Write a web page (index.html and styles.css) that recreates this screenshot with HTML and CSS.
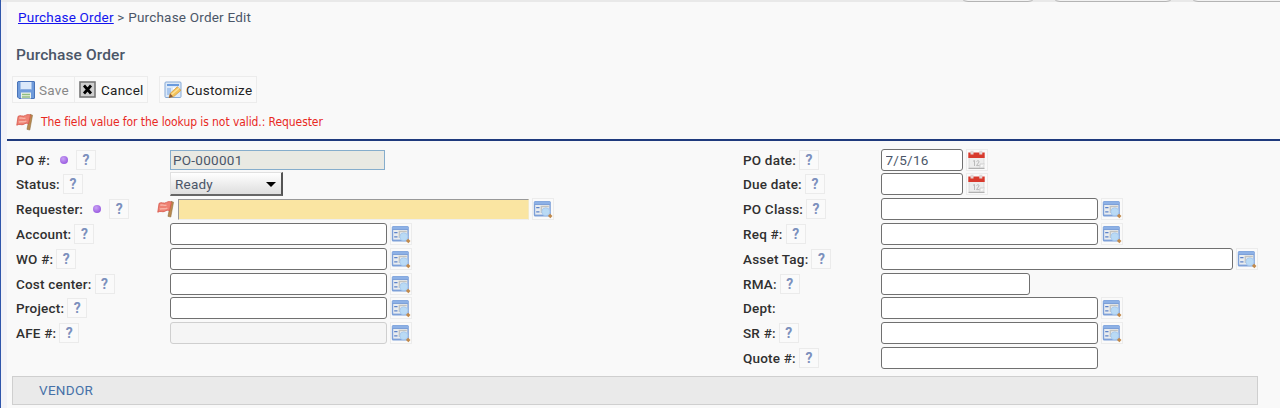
FILE: index.html
```
<!DOCTYPE html>
<html lang="en">
    <head>
        <meta charset="UTF-8">
        <title>Purchase Order Edit</title>
        <link rel="stylesheet" href="styles.css">
    </head>
    <body>
        <svg class="defs" width="0" height="0">
            <symbol id="flag" viewBox="0 0 18 18">
                <path d="M14.8 .8 L17.5 1.8 L14.6 17.5 L11.6 16.8 Z" fill="#b98a4e" stroke="#8f6a3c" stroke-width=".6"/>
                <path d="M2.2 3 C5 1 7 4 10 2 C12 .8 14 1 15.3 1.8 L13.2 11 C11.5 9.6 10 10.4 8 11.6 C5.6 12.6 3.8 10.6 .8 12.4 Z" fill="#ee8173" stroke="#d65448" stroke-width=".8"/>
                <path d="M3.5 5 C6 4 7.5 6 10 4.8 M3 9 C5.5 8 8 9.6 11 8" fill="none" stroke="#f8b3a6" stroke-width="1.5"/>
            </symbol>
            <symbol id="lookup" viewBox="0 0 20 20">
                <rect x=".8" y="2" width="17" height="15.5" rx="1.5" fill="#7da0d8"/>
                <path d="M1.3 5 V3.5 Q1.3 2.5 3 2.5 H16 Q17.3 2.5 17.3 3.5 V5 Z" fill="#8db1e6"/>
                <rect x="2.2" y="6" width="14.2" height="9.6" fill="#e9edf0"/>
                <path d="M3.2 8.6 H6.5 M3.2 12.8 H6.5" stroke="#5d82c8" stroke-width="1.3"/>
                <path d="M8.3 14 V7.5 H15.8" fill="none" stroke="#c3c3bf" stroke-width="1.3"/>
                <path d="M15.8 15.7 L18.4 18.2" stroke="#c18a4c" stroke-width="3"/>
                <circle cx="12.8" cy="12.8" r="4" fill="#b9daf5" stroke="#a5c6ec" stroke-width=".8"/>
            </symbol>
            <symbol id="calendar" viewBox="0 0 20 20">
                <rect x="2" y="6" width="15" height="12" fill="#ededed" stroke="#d2d2d2" stroke-width=".7"/>
                <path d="M1.5 18.4 H17.5" stroke="#aaa" stroke-width="1"/>
                <path d="M1.3 2.5 H17.7 V8 H1.3 Z" fill="#d83a2d"/>
                <path d="M5 .8 V4.5 M13.8 .8 V4.5" stroke="#e2d6d6" stroke-width="3"/>
                <path d="M6 11.3 L7.5 10.5 V16 M9.5 11.5 Q12 9.5 12 12 L9.5 15.6 H12.5" fill="none" stroke="#bbb" stroke-width="1"/>
                <path d="M13 18 V14 H17.5" fill="#fafafa" stroke="#c6c6c6" stroke-width=".8"/>
            </symbol>
        </svg>

        <div class="topbar">
            <span class="pill pill-1"></span>
            <span class="pill pill-2"></span>
            <span class="pill pill-3"></span>
        </div>
        <div class="page">
            <div class="breadcrumb"><a href="#">Purchase Order</a> &gt; Purchase Order Edit</div>
            <h1 class="title">Purchase Order</h1>
            <div class="toolbar">
                <button class="btn btn-save" disabled>
                    <svg width="18" height="18" viewBox="0 0 18 18">
                        <path d="M1 .5 H17 Q17.5 .5 17.5 1 V17 Q17.5 17.5 17 17.5 H2 L.5 16 V1 Z" fill="#6f9bdb" stroke="#4a74b8"/>
                        <rect x="3.5" y="1" width="11" height="7.5" fill="#dce9fa"/>
                        <path d="M3.5 8.5 H14.5" stroke="#8caee0"/>
                        <rect x="4" y="11.5" width="10" height="6" fill="#eef3e8"/>
                        <path d="M5 13.5 H13 M5 16 H13" stroke="#90bd80" stroke-width="1.3"/>
                    </svg>
                    <span>Save</span>
                </button>
                <button class="btn btn-cancel">
                    <svg width="17" height="17" viewBox="0 0 17 17">
                        <rect x="1" y="1" width="15" height="15" fill="#cfcfcf" stroke="#777" stroke-width="1.6"/>
                        <path d="M5 4.5 L12 12.5 M12 4.5 L5 12.5" stroke="#000" stroke-width="2.7"/>
                    </svg>
                    <span>Cancel</span>
                </button>
                <button class="btn btn-customize">
                    <svg width="18" height="18" viewBox="0 0 18 18">
                        <rect x="1" y="1" width="16" height="15.5" rx="1" fill="#dce9f8" stroke="#86a9d6"/>
                        <path d="M3 4 H15" stroke="#6b9bdd" stroke-width="2"/>
                        <path d="M3 7 H7 V14 H3 Z" fill="#a9c7ee"/>
                        <path d="M9 7.5 H14" stroke="#fff" stroke-width="2"/>
                        <path d="M5 16.5 L6.3 12.3 L13.3 5.8 L17 9.3 L9.5 15.8 Z" fill="#f4c35a" stroke="#cf9640" stroke-width=".7"/>
                        <path d="M7.5 13.6 L15 7.2" stroke="#fbe2a0" stroke-width="1.3"/>
                        <path d="M4.8 17 L6.2 12.8 L9 15.6 Z" fill="#8a5c3a"/>
                    </svg>
                    <span>Customize</span>
                </button>
            </div>
            <div class="error">
                <svg class="flag"><use href="#flag"/></svg>
                <span>The field value for the lookup is not valid.: Requester</span>
            </div>
        </div>

        <div class="form">
            <div class="col col-left">
                <div class="row">
                    <div class="label">PO #:<i class="dot"></i><b class="help">?</b></div>
                    <input class="readonly" type="text" value="PO-000001" readonly>
                </div>
                <div class="row">
                    <div class="label">Status:<b class="help">?</b></div>
                    <div class="select">Ready<i class="caret"></i></div>
                </div>
                <div class="row row-error">
                    <div class="label">Requester:<i class="dot"></i><b class="help">?</b></div>
                    <svg class="flag"><use href="#flag"/></svg>
                    <input class="invalid" type="text">
                    <span class="pick"><svg><use href="#lookup"/></svg></span>
                </div>
                <div class="row">
                    <div class="label">Account:<b class="help">?</b></div>
                    <input type="text">
                    <span class="pick"><svg><use href="#lookup"/></svg></span>
                </div>
                <div class="row">
                    <div class="label">WO #:<b class="help">?</b></div>
                    <input type="text">
                    <span class="pick"><svg><use href="#lookup"/></svg></span>
                </div>
                <div class="row">
                    <div class="label">Cost center:<b class="help">?</b></div>
                    <input type="text">
                    <span class="pick"><svg><use href="#lookup"/></svg></span>
                </div>
                <div class="row">
                    <div class="label">Project:<b class="help">?</b></div>
                    <input type="text">
                    <span class="pick"><svg><use href="#lookup"/></svg></span>
                </div>
                <div class="row">
                    <div class="label">AFE #:<b class="help">?</b></div>
                    <input type="text" disabled>
                    <span class="pick"><svg><use href="#lookup"/></svg></span>
                </div>
            </div>
            <div class="col col-right">
                <div class="row">
                    <div class="label">PO date:<b class="help">?</b></div>
                    <input class="date" type="text" value="7/5/16">
                    <span class="pick"><svg><use href="#calendar"/></svg></span>
                </div>
                <div class="row">
                    <div class="label">Due date:<b class="help">?</b></div>
                    <input class="date" type="text">
                    <span class="pick"><svg><use href="#calendar"/></svg></span>
                </div>
                <div class="row">
                    <div class="label">PO Class:<b class="help">?</b></div>
                    <input type="text">
                    <span class="pick"><svg><use href="#lookup"/></svg></span>
                </div>
                <div class="row">
                    <div class="label">Req #:<b class="help">?</b></div>
                    <input type="text">
                    <span class="pick"><svg><use href="#lookup"/></svg></span>
                </div>
                <div class="row">
                    <div class="label">Asset Tag:<b class="help">?</b></div>
                    <input class="wide" type="text">
                    <span class="pick"><svg><use href="#lookup"/></svg></span>
                </div>
                <div class="row">
                    <div class="label">RMA:<b class="help">?</b></div>
                    <input class="medium" type="text">
                </div>
                <div class="row">
                    <div class="label">Dept:</div>
                    <input type="text">
                    <span class="pick"><svg><use href="#lookup"/></svg></span>
                </div>
                <div class="row">
                    <div class="label">SR #:<b class="help">?</b></div>
                    <input type="text">
                    <span class="pick"><svg><use href="#lookup"/></svg></span>
                </div>
                <div class="row">
                    <div class="label">Quote #:<b class="help">?</b></div>
                    <input type="text">
                </div>
            </div>
        </div>
        <div class="section">VENDOR</div>
    </body>
</html>
```
FILE: styles.css
```
*{
    box-sizing:border-box;
    margin:0;
    padding:0;
}
body{
    height:408px;
    overflow:hidden;
    background:linear-gradient(90deg,#2f56ab 1px,#f2f2f7 1px,#f2f2f7 7px,#f9f9f9 7px);
    font:13.5px/20px Roboto, sans-serif;
    letter-spacing:.21px;
    color:#4b5668;
}
.defs{
    display:block;
}
.topbar{
    display:flex;
    height:2px;
    margin-left:1px;
    padding-left:958px;
    background:#e9e9e9;
}
.pill{
    flex:none;
    height:18px;
    margin-top:-16px;
    border:1px solid #b4b4b4;
    border-radius:9px;
    background:#f2f2f2;
}
.pill-1{
    width:78px;
}
.pill-2{
    width:124px;
    margin-left:14px;
}
.pill-3{
    width:120px;
    margin-left:14px;
}
.page{
    height:137px;
    padding:5px 0 0 16px;
}
.breadcrumb{
    padding-left:2px;
}
.breadcrumb a{
    color:#1414ee;
}
.title{
    margin-top:18px;
    font-size:15.5px;
    line-height:21px;
    font-weight:500;
    letter-spacing:.1px;
}
.toolbar{
    display:flex;
    height:27px;
    margin:10px 0 0 -4px;
}
.btn{
    display:flex;
    align-items:center;
    border:1px solid #ececec;
    background:#fafafa;
    font:13.5px/20px Roboto, sans-serif;
    letter-spacing:.25px;
    color:#222;
}
.btn-save{
    width:63px;
    padding-left:4px;
    gap:4px;
    color:#888;
}
.btn-cancel{
    width:74px;
    margin-left:-1px;
    padding-left:4px;
    gap:5px;
}
.btn-customize{
    width:98px;
    margin-left:11px;
    padding-left:4px;
    gap:4px;
}
.error{
    display:flex;
    align-items:center;
    height:20px;
    margin-top:9px;
    gap:8px;
    font:12px/20px "DejaVu Sans Condensed", "DejaVu Sans", sans-serif;
    font-stretch:condensed;
    letter-spacing:-.08px;
    color:#e8291f;
}
.flag{
    flex:none;
    width:17px;
    height:18px;
}

/* field rows */
.form{
    display:flex;
    height:237px;
    margin-left:7px;
    padding:6.3px 0 0 9px;
    border-top:2px solid #1f3a7d;
}
.col-left{
    width:727px;
}
.row{
    display:flex;
    align-items:center;
    height:24.8px;
}
.label{
    display:flex;
    flex:none;
    align-items:center;
    width:154px;
    font-weight:500;
    letter-spacing:.2px;
    color:#303030;
}
.col-right .label{
    width:137.5px;
}
.row-error .label{
    width:141px;
}
.help{
    width:20px;
    height:20px;
    margin-left:3px;
    border:1px solid #ebebeb;
    background:#fafafa;
    font-size:14px;
    line-height:19px;
    font-weight:700;
    letter-spacing:0;
    text-align:center;
    color:#7c90bd;
}
.dot{
    width:8px;
    height:8px;
    margin:0 5px 0 10px;
    border-radius:4px;
    background:radial-gradient(circle at 40% 35%,#c9a2f5,#9a5be0 75%);
}
input{
    width:217px;
    height:22px;
    padding:0 4px;
    border:1px solid #707070;
    border-radius:3px;
    background:#fff;
    font:13.5px/20px Roboto, sans-serif;
    letter-spacing:.27px;
    color:#4b5668;
}
input.date{
    width:82px;
}
input.medium{
    width:149.5px;
}
input.wide{
    width:352px;
}
input:disabled{
    border-color:#cfcfcf;
    background:#f5f5f5;
}
input.readonly{
    width:215px;
    height:20px;
    padding:0 2px;
    border-color:#86adcc;
    border-radius:0;
    background:#e9e9e3;
}
input.invalid{
    width:351px;
    height:21px;
    margin-left:4px;
    border-color:#999 #f3e9c4 #eee #999;
    border-radius:0;
    background:#fae5a2;
}
.select{
    display:flex;
    align-items:center;
    justify-content:space-between;
    width:113px;
    height:24px;
    padding:1px 5px 0 4px;
    border:1px solid #e0e0e0;
    border-right:2px solid #555;
    border-bottom:2px solid #666;
    background:linear-gradient(#fff,#dedede);
}
.caret{
    border:5px solid transparent;
    border-top:5px solid #000;
    border-bottom:0;
}
.pick{
    width:22px;
    height:22px;
    margin-left:3px;
    border:1px solid #ececec;
    background:#fafafa;
}
.pick svg{
    display:block;
    width:20px;
    height:20px;
}
.section{
    width:1246px;
    height:29px;
    margin-left:12px;
    padding-left:26px;
    border:1px solid #cfcfcf;
    background:#eaeaea;
    line-height:27px;
    letter-spacing:.3px;
    color:#4671a8;
}
```
